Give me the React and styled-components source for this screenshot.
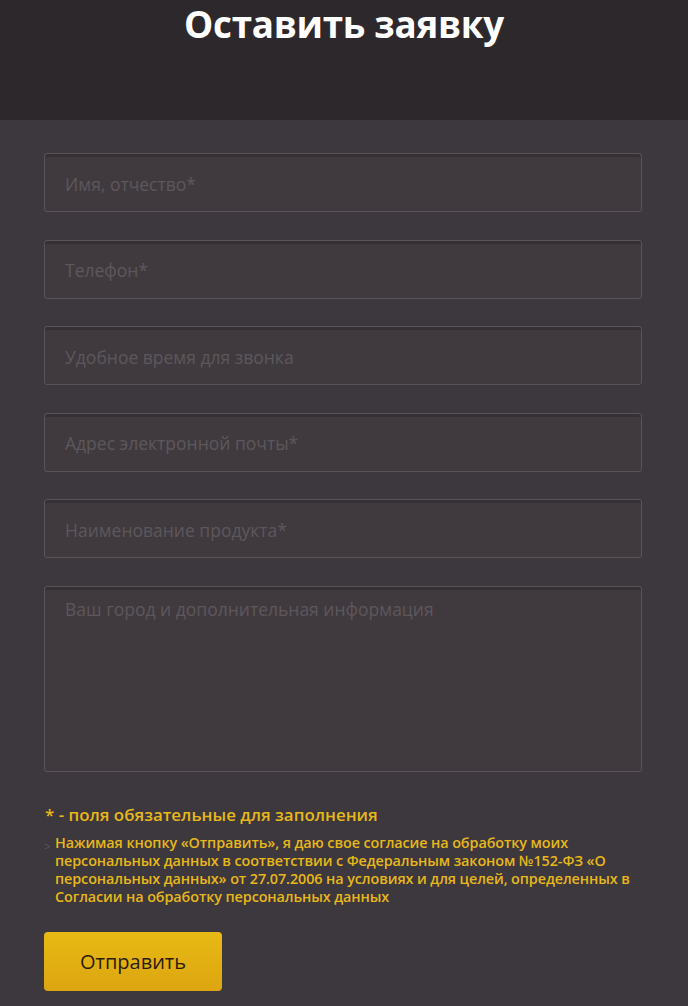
import React from "react";
import styled, { createGlobalStyle } from "styled-components";

const Global = createGlobalStyle`
  html, body { margin: 0; padding: 0; background: #3d373e; }
  body { font-family: "Open Sans", "Noto Sans", sans-serif; }
  * { box-sizing: border-box; }
`;

const Page = styled.div`
  width: 688px;
  min-height: 1006px;
  background: #3d373e;
`;

const Header = styled.header`
  height: 120px;
  background: #2d282b;
  display: flex;
  justify-content: center;
  align-items: flex-start;
`;

const Title = styled.h1`
  margin: 0;
  padding-top: 1px;
  font-family: "Open Sans", sans-serif;
  font-weight: 700;
  font-size: 36.8px;
  line-height: 46px;
  color: #ffffff;
  letter-spacing: -0.3px;
`;

const Form = styled.form`
  padding: 33px 46px 0 44px;
  display: flex;
  flex-direction: column;
`;

const Fields = styled.div`
  display: flex;
  flex-direction: column;
  gap: 27.5px;
`;

const fieldBase = `
  width: 598px;
  border: 1px solid #5a545a;
  border-radius: 3px;
  background: #403a3f;
  box-shadow: inset 0 3px 0 rgba(0,0,0,0.16);
  font-family: "Open Sans", sans-serif;
  font-size: 17.5px;
  color: #e0dde0;
  outline: none;
  padding: 0 20px;
  &::placeholder { color: #5d575c; opacity: 1; }
`;

const Input = styled.input`
  ${fieldBase}
  height: 59px;
  padding-top: 2px;
`;

const TextArea = styled.textarea`
  ${fieldBase}
  height: 186px;
  padding-top: 9px;
  resize: none;
  line-height: 26px;
`;

const Required = styled.p`
  margin: 31px 0 0 1px;
  font-size: 16.9px;
  font-weight: 600;
  color: #e6b81a;
  line-height: 24px;
`;

const Consent = styled.div`
  margin-top: 7px;
  display: flex;
  gap: 3px;
`;

const Marker = styled.span`
  color: #5b5459;
  font-size: 12px;
  line-height: 18px;
  margin-top: 4px;
  width: 8px;
  flex: none;
`;

const ConsentText = styled.p`
  margin: 0;
  font-size: 14.4px;
  font-weight: 600;
  line-height: 18px;
  color: #e6b81a;
  letter-spacing: -0.1px;
`;

const Button = styled.button`
  margin-top: 26px;
  width: 178px;
  height: 59px;
  border: none;
  border-radius: 4px;
  background: linear-gradient(#e8ba14, #dca511);
  color: #2a1d0c;
  font-family: "Open Sans", sans-serif;
  font-size: 20px;
  cursor: pointer;
`;

const fields = [
  "Имя, отчество*",
  "Телефон*",
  "Удобное время для звонка",
  "Адрес электронной почты*",
  "Наименование продукта*",
];

export default function App() {
  return (
    <Page>
      <Global />
      <Header>
        <Title>Оставить заявку</Title>
      </Header>
      <Form onSubmit={(e) => e.preventDefault()}>
        <Fields>
          {fields.map((f) => (
            <Input key={f} placeholder={f} />
          ))}
          <TextArea placeholder="Ваш город и дополнительная информация" />
        </Fields>
        <Required>* - поля обязательные для заполнения</Required>
        <Consent>
          <Marker>&gt;</Marker>
          <ConsentText>
            Нажимая кнопку «Отправить», я даю свое согласие на обработку моих
            персональных данных в соответствии с Федеральным законом №152-ФЗ «О
            персональных данных» от 27.07.2006 на условиях и для целей,
            определенных в Согласии на обработку персональных данных
          </ConsentText>
        </Consent>
        <Button type="submit">Отправить</Button>
      </Form>
    </Page>
  );
}
